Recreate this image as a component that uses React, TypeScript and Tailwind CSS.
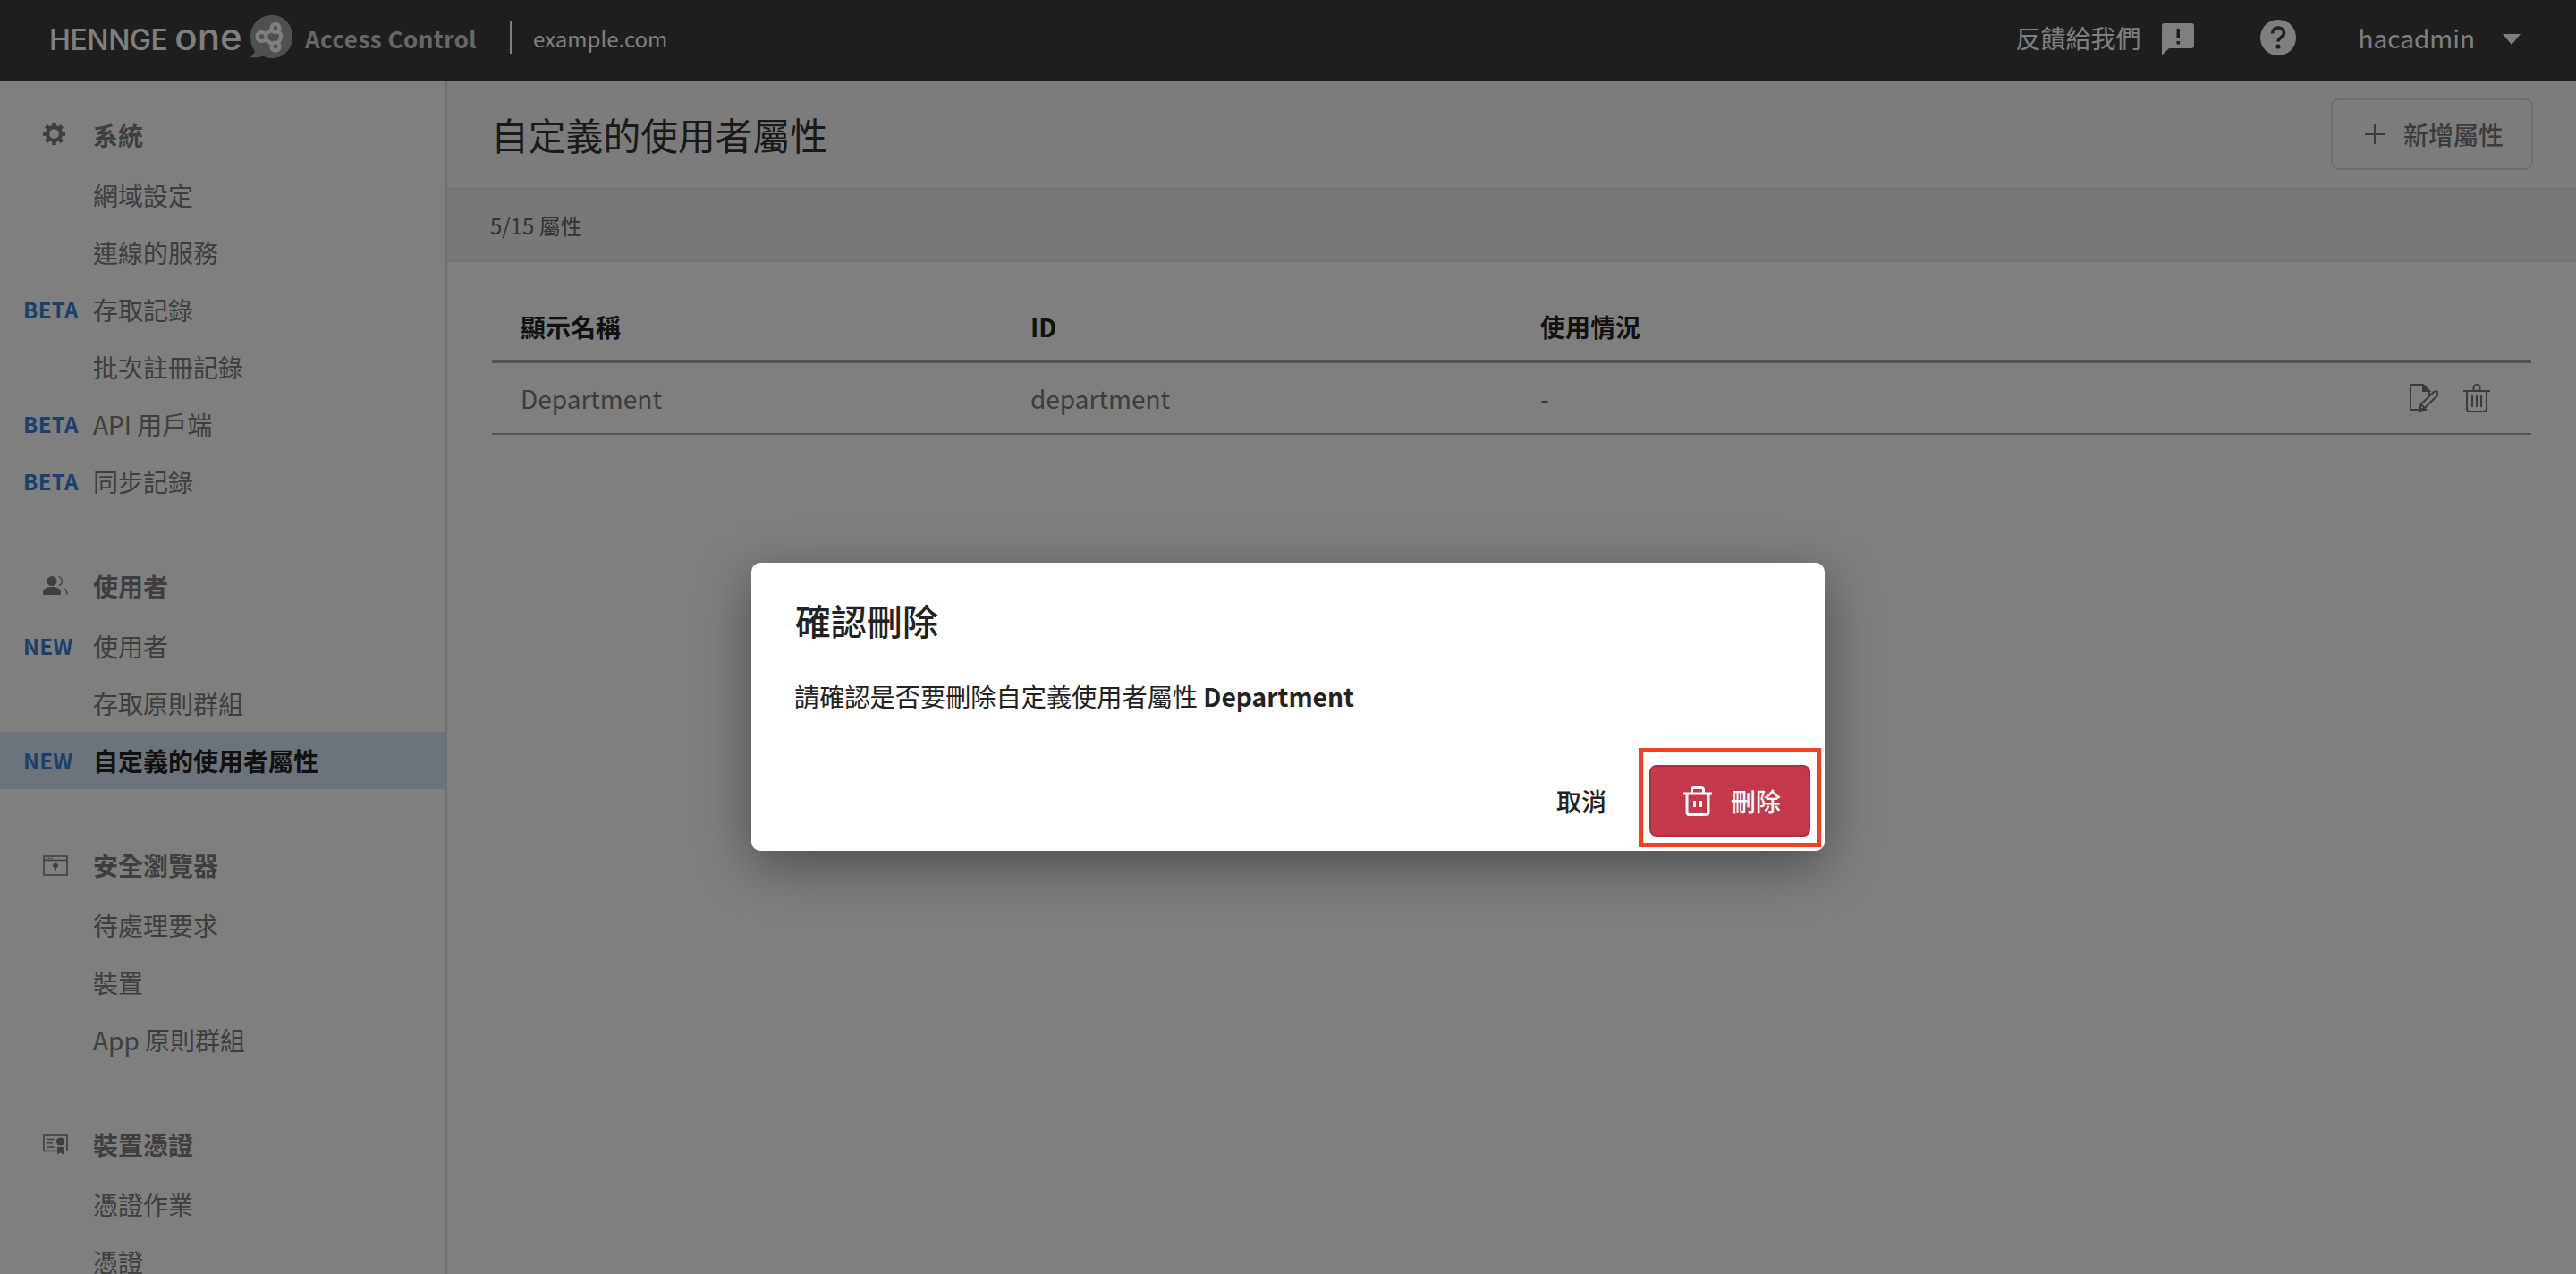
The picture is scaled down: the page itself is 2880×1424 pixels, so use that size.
import React from 'react';

type NavItem = { label: string; badge?: string; active?: boolean };
type NavSection = { title: string; icon: React.ReactNode; items: NavItem[] };

const GearIcon = () => (
  <svg viewBox="0 0 24 24" className="mb-[4px] h-[25px] w-[25px]" fill="currentColor">
    <circle cx="12" cy="12" r="7.2" fill="none" stroke="currentColor" strokeWidth="4.2" />
    {[0, 45, 90, 135, 180, 225, 270, 315].map(deg => (
      <rect key={deg} x="9.8" y="0" width="4.4" height="5" transform={`rotate(${deg} 12 12)`} />
    ))}
  </svg>
);

const UsersIcon = () => (
  <svg viewBox="0 0 28 24" className="h-[24px] w-[28px]" fill="currentColor">
    <circle cx="10" cy="6.5" r="5.5" />
    <path d="M0 22v-3.5C0 15 5 13 10 13s10 2 10 5.5V22z" />
    <path d="M17.5 1.5c2.6 1 3.8 3 3.8 5.2s-1.2 4-3.4 5" fill="none" stroke="currentColor" strokeWidth="1.3" />
    <path d="M23 14.5c2.6 1.2 4 2.8 4 7.5" fill="none" stroke="currentColor" strokeWidth="1.3" />
  </svg>
);

const BrowserIcon = () => (
  <svg viewBox="0 0 28 23" className="h-[23px] w-[28px]" fill="currentColor">
    <path d="M1 1h26v21H1z" fill="none" stroke="currentColor" strokeWidth="1.6" />
    <path d="M1 5.5h26" stroke="currentColor" strokeWidth="1.6" />
    <circle cx="4" cy="3.3" r=".9" />
    <circle cx="7" cy="3.3" r=".9" />
    <circle cx="10" cy="3.3" r=".9" />
    <circle cx="14" cy="11.5" r="2.8" />
    <path d="M13 12.5h2V18h-2z" />
  </svg>
);

const CertIcon = () => (
  <svg viewBox="0 0 28 23" className="h-[23px] w-[28px]" fill="currentColor">
    <path d="M16 18.5H1V1h26v17.5" fill="none" stroke="currentColor" strokeWidth="1.6" />
    <path d="M5 5.5h7.5M5 9.8h6M5 14h7.5" stroke="currentColor" strokeWidth="1.6" />
    <circle cx="19.5" cy="8" r="4.6" />
    <path d="M16 14h7v8.5l-3.5-2-3.5 2z" />
  </svg>
);

const sections: NavSection[] = [
  {
    title: '系統',
    icon: <GearIcon />,
    items: [
      { label: '網域設定' },
      { label: '連線的服務' },
      { label: '存取記錄', badge: 'BETA' },
      { label: '批次註冊記錄' },
      { label: 'API 用戶端', badge: 'BETA' },
      { label: '同步記錄', badge: 'BETA' },
    ],
  },
  {
    title: '使用者',
    icon: <UsersIcon />,
    items: [
      { label: '使用者', badge: 'NEW' },
      { label: '存取原則群組' },
      { label: '自定義的使用者屬性', badge: 'NEW', active: true },
    ],
  },
  {
    title: '安全瀏覽器',
    icon: <BrowserIcon />,
    items: [{ label: '待處理要求' }, { label: '裝置' }, { label: 'App 原則群組' }],
  },
  {
    title: '裝置憑證',
    icon: <CertIcon />,
    items: [{ label: '憑證作業' }, { label: '憑證' }],
  },
];

const Logo = () => (
  <svg viewBox="0 0 50 50" className="mb-[8px] h-[50px] w-[50px] shrink-0">
    <path d="M26 1C39 1 49 11 49 25S39 49 26 49c-4 0-7-1-10-2.500-3 1.800-9 2.300-15 1.500 3-1.500 5-3.500 6-6.500C3.500 37 2 31 2 25 2 11 13 1 26 1z" fill="#a0a0a0" />
    <g fill="none" stroke="#fff" strokeWidth="4.200">
      <circle cx="14.500" cy="25" r="5" />
      <circle cx="30" cy="15.500" r="4.500" />
      <circle cx="30" cy="36" r="4.500" />
      <path d="M19 22l7-4.500M19 28l7 5.500M33 19l2.500 3c2 3 0 6-2.500 9.500" />
    </g>
  </svg>
);

const RowEditIcon = () => (
  <svg viewBox="0 0 32 32" className="h-[32px] w-[32px]" fill="none" stroke="#777" strokeWidth="2">
    <path d="M19 29H1V1h14l7 7v4" />
    <path d="M15 1v7h7z" fill="#777" />
    <path d="M11 30l1.500-7L26.500 9.500c1.500-1.500 3.500-1.500 4.500-.5s1 3-.5 4.500L17 27z" />
    <path d="M12.500 23l4.500 4" />
    <path d="M11 31l1-5 4 4z" fill="#777" stroke="none" />
  </svg>
);

const RowTrashIcon = () => (
  <svg viewBox="0 0 30 32" className="h-[32px] w-[30px]" fill="none" stroke="#777" strokeWidth="2">
    <path d="M0 8h30" />
    <path d="M11.500 8V4.500a3.500 3.500 0 0 1 7 0V8" />
    <path d="M4 8v20a3 3 0 0 0 3 3h16a3 3 0 0 0 3-3V8" />
    <path d="M10 13v13M15 13v13M20 13v13" />
  </svg>
);

export default function App() {
  return (
    <div className="relative h-[1424px] w-[2880px] overflow-hidden bg-white font-['Noto_Sans_CJK_TC',sans-serif]">
      <header className="flex h-[90px] items-center bg-[#3c3c3c] text-white">
        <div className="ml-[55px] flex w-[214px] items-baseline whitespace-nowrap pb-[8px] font-['Inter',sans-serif] font-medium">
          <span className="text-[32px] leading-none tracking-[-0.4px]">HENNGE</span>
          <span className="ml-[8px] text-[42px] leading-none">one</span>
        </div>
        <div className="ml-[9px]">
          <Logo />
        </div>
        <span className="ml-[13px] pb-[6px] text-[26px] font-bold tracking-[0.45px] text-[#cfcfcf]">Access Control</span>
        <div className="mb-[6px] ml-[37px] h-[36px] w-[2px] bg-white" />
        <span className="ml-[24px] pb-[5px] text-[24px] text-white">example.com</span>
        <div className="ml-auto flex items-center">
          <span className="pb-[6px] text-[28px]">反饋給我們</span>
          <svg viewBox="0 0 36 36" className="mb-[2px] ml-[24px] h-[36px] w-[36px]" fill="#fff">
            <path fillRule="evenodd" d="M3 0h30a3 3 0 0 1 3 3v22a3 3 0 0 1-3 3H8l-8 8V3a3 3 0 0 1 3-3zM16.500 6v11h3.500V6zM16.500 20v3.500h3.500V20z" />
          </svg>
          <svg viewBox="0 0 40 40" className="mb-[6px] ml-[74px] h-[40px] w-[40px]">
            <circle cx="20" cy="20" r="20" fill="#fff" />
            <path d="M13.500 15.500c0-4 3-6.500 6.500-6.500s6.500 2.500 6.500 6c0 5-6.500 5-6.500 9.500" fill="none" stroke="#3c3c3c" strokeWidth="3.600" />
            <circle cx="20" cy="30" r="2.600" fill="#3c3c3c" />
          </svg>
          <span className="ml-[69px] pb-[6px] text-[28px]">hacadmin</span>
          <svg viewBox="0 0 20 12" className="mb-[2px] ml-[31px] mr-[62px] h-[12px] w-[20px]" fill="#fff">
            <path d="M0 0h20L10 12z" />
          </svg>
        </div>
      </header>

      <div className="flex h-[1334px]">
        <aside className="w-[500px] shrink-0 border-r-2 border-[#dedede] pt-[26px] text-[28px] text-[#7c7c7c]">
          {sections.map(section => (
            <div key={section.title} className="mb-[50px]">
              <div className="flex h-[70px] items-center">
                <span className="flex w-[104px] shrink-0 justify-start pl-[48px]">{section.icon}</span>
                <span className="font-bold">{section.title}</span>
              </div>
              {section.items.map(item => (
                <div
                  key={item.label}
                  className={item.active ? 'flex h-[64px] items-center bg-[#d8e6f5] font-bold text-[#222]' : 'flex h-[64px] items-center'}
                >
                  <span className="w-[104px] shrink-0 pl-[26px] text-[24px] font-bold tracking-[0.3px] text-[#3a7fd8]">
                    {item.badge}
                  </span>
                  <span>{item.label}</span>
                </div>
              ))}
            </div>
          ))}
        </aside>

        <main className="min-w-0 flex-1">
          <div className="flex h-[122px] items-center justify-between border-b-2 border-[#e4e4e4] bg-[#f8f8f8] pl-[49px] pr-[48px]">
            <h1 className="text-[41.8px] text-[#333]">自定義的使用者屬性</h1>
            <button className="flex h-[80px] w-[226px] items-center rounded-[8px] border-2 border-[#dedede] pl-[36px] text-[28px] font-medium text-[#777]">
              <svg viewBox="0 0 22 22" className="h-[22px] w-[22px]" stroke="currentColor" strokeWidth="2">
                <path d="M11 0v22M0 11h22" />
              </svg>
              <span className="ml-[21px]">新增屬性</span>
            </button>
          </div>
          <div className="flex h-[81px] items-center border-b-2 border-[#e4e4e4] bg-[#f0f0f0] pl-[48px] text-[24px] text-[#666]">
            5/15 屬性
          </div>
          <div className="pl-[50px] pr-[50px] pt-[37px]">
            <div className="grid h-[76px] grid-cols-[570px_570px_1fr] items-center border-b-4 border-[#a8a8a8] pb-[2px] pl-[32px] text-[28px] font-bold text-[#222]">
              <span>顯示名稱</span>
              <span>ID</span>
              <span>使用情況</span>
            </div>
            <div className="grid h-[80px] grid-cols-[570px_570px_1fr_auto] items-center border-b-2 border-[#a8a8a8] pl-[32px] text-[28px] text-[#787878]">
              <span>Department</span>
              <span>department</span>
              <span>-</span>
              <span className="flex items-center gap-[28px] pr-[46px]">
                <RowEditIcon />
                <RowTrashIcon />
              </span>
            </div>
          </div>
        </main>
      </div>

      <div className="absolute inset-0 flex justify-center bg-black/50 pt-[629px]">
        <div className="relative h-[322px] w-[1200px] rounded-[10px] bg-white pl-[48px] text-[#222] shadow-[0_16px_60px_rgba(0,0,0,0.4)]">
          <h2 className="pl-px pt-[34px] text-[40px] font-medium leading-[60px]">確認刪除</h2>
          <p className="mt-[34px] text-[28.2px] leading-[42px]">
            請確認是否要刪除自定義使用者屬性 <b className="font-bold">Department</b>
          </p>
          <div className="absolute bottom-[16px] right-[16px] flex items-center">
            <button className="mr-[48px] text-[28px] font-medium">取消</button>
            <button className="flex h-[80px] w-[180px] items-center rounded-[8px] border-2 border-[#ad3041] bg-[#c3394b] pl-[36px] text-[28px] font-medium text-white">
              <svg viewBox="0 0 32 33" className="h-[33px] w-[32px]" fill="none" stroke="#fff" strokeWidth="3">
                <path d="M0 8h32" />
                <path d="M9.500 8V4a2.500 2.500 0 0 1 2.500-2.500h8A2.500 2.500 0 0 1 22.500 4v4" />
                <path d="M4 8v21a2.500 2.500 0 0 0 2.500 2.500h19A2.500 2.500 0 0 0 28 29V8" />
                <path d="M12.500 16v7M19.500 16v7" />
              </svg>
              <span className="ml-[21px]">刪除</span>
            </button>
          </div>
          <div className="absolute left-[992px] top-[207px] h-[111px] w-[204px] border-[5px] border-[#ee4023]" />
        </div>
      </div>
    </div>
  );
}
